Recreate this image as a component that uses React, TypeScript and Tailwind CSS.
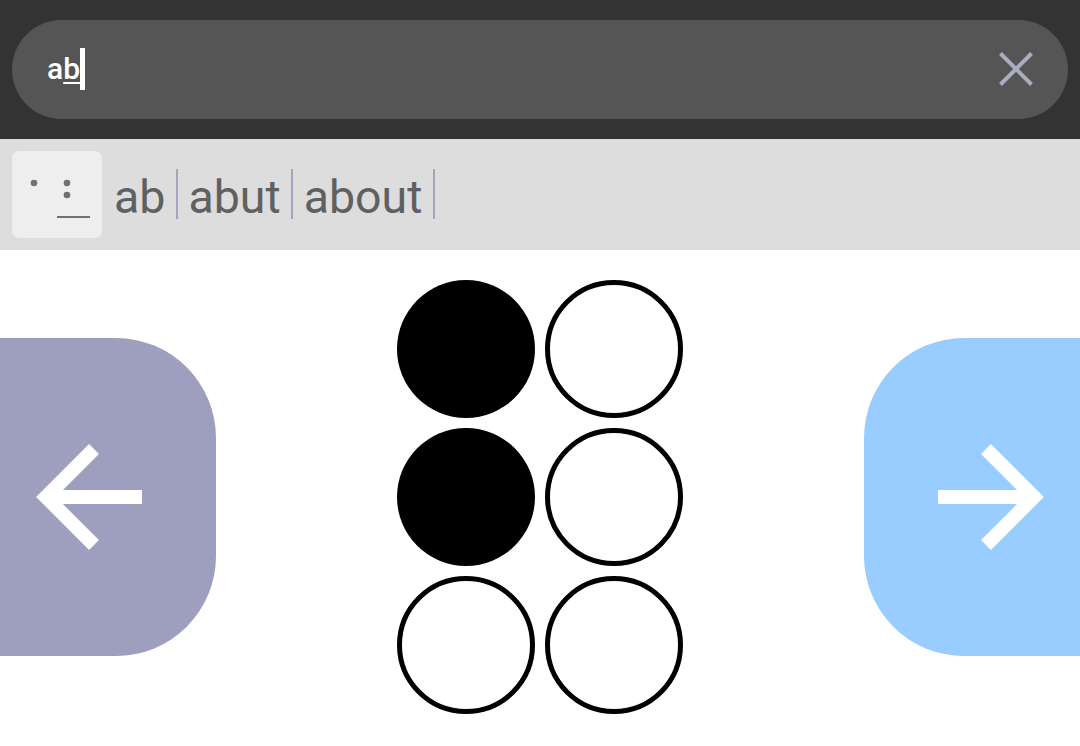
export default function App() {
  const dots = [true, false, true, false, false, false];
  const words = ["ab", "abut", "about"];
  return (
    <div className="w-[1080px] h-[746px] overflow-hidden bg-white flex flex-col font-['Roboto',sans-serif]">
      <div className="h-[139px] shrink-0 bg-[#333333] px-3 pt-5">
        <div className="h-[99px] rounded-[50px] bg-[#555555] flex items-center justify-between pl-[35px] pr-[35px]">
          <div className="flex items-center h-[42px] -mt-[1px]">
            <span className="text-[30px] leading-[42px] font-medium text-white">
              a<span className="underline decoration-2 underline-offset-[3px]">b</span>
            </span>
            <span className="w-[5px] h-[42px] bg-white" />
          </div>
          <svg width="34" height="34" viewBox="0 0 34 34" fill="none" stroke="#acacc0" strokeWidth="4" className="-mt-[1px]">
            <path d="M1.5 1.5L32.5 32.5M32.5 1.5L1.5 32.5" />
          </svg>
        </div>
      </div>
      <div className="h-[111px] shrink-0 bg-[#dddddd] px-3 flex items-center gap-[12px]">
        <div className="w-[90px] h-[87px] rounded-[7px] bg-[#eeeeee] -mt-[1px]">
          <svg width="90" height="87" viewBox="0 0 90 87" fill="#707070">
            <circle cx="22" cy="32" r="3.3" />
            <circle cx="55" cy="32" r="3.3" />
            <circle cx="55" cy="44" r="3.3" />
            <rect x="45" y="65" width="33" height="2" />
          </svg>
        </div>
        <div className="flex items-center -mt-[1px]">
          {words.map((w) => (
            <div key={w} className="flex items-center">
              <span className="text-[46.5px] leading-[52px] pt-[6px] text-[#606060]">{w}</span>
              <span className="w-[2px] h-[50px] bg-[#a4a4c0] ml-[10.5px] mr-[10.5px]" />
            </div>
          ))}
        </div>
      </div>
      <div className="flex-1 flex justify-between items-start">
        <button className="mt-[88px] w-[216px] h-[318px] rounded-r-[100px] bg-[#9e9ebe] flex items-center pl-[36px]">
          <svg width="106" height="106" viewBox="0 0 106 106" fill="none" stroke="#ffffff" strokeWidth="14">
            <path d="M106 53H10" />
            <path d="M58 5L10 53L58 101" />
          </svg>
        </button>
        <div className="mt-[30px] grid grid-cols-[138px_138px] gap-[10px]">
          {dots.map((on, i) => (
            <div
              key={i}
              className={on ? "w-[138px] h-[138px] rounded-full bg-black" : "w-[138px] h-[138px] rounded-full border-[5px] border-black bg-white"}
            />
          ))}
        </div>
        <button className="mt-[88px] w-[216px] h-[318px] rounded-l-[100px] bg-[#99ccff] flex items-center justify-end pr-[36px]">
          <svg width="106" height="106" viewBox="0 0 106 106" fill="none" stroke="#ffffff" strokeWidth="14">
            <path d="M0 53H96" />
            <path d="M48 5L96 53L48 101" />
          </svg>
        </button>
      </div>
    </div>
  );
}
